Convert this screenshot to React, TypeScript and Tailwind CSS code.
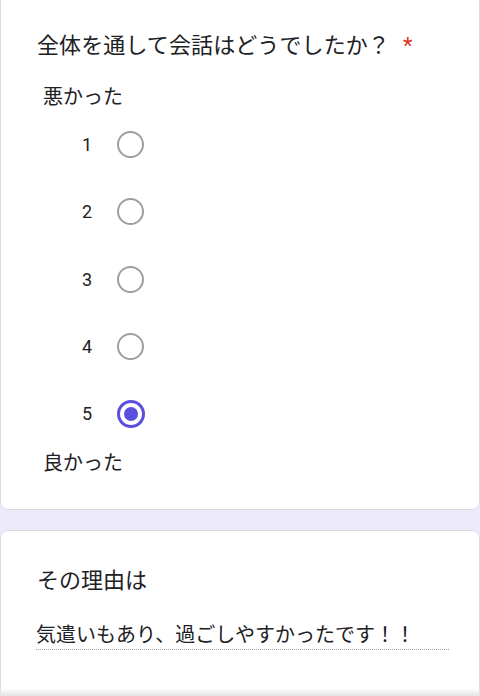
import React from 'react';

const font = { fontFamily: '"Noto Sans CJK JP", "Noto Sans", sans-serif' };

const Radio = ({ checked }: { checked?: boolean }) =>
  checked ? (
    <div className="flex h-[28px] w-[28px] items-center justify-center rounded-full border-[3px] border-[#5b4fe0]">
      <div className="h-[14px] w-[14px] rounded-full bg-[#5b4fe0]" />
    </div>
  ) : (
    <div className="h-[27px] w-[27px] rounded-full border-[2.5px] border-[#9e9e9e]" />
  );

export default function App() {
  const selected = 5;

  return (
    <div className="relative h-[696px] overflow-hidden bg-[#eceafa] text-[#202124]" style={font}>
      {/* Question card */}
      <div className="-mt-2 h-[518px] rounded-lg border border-[#dadce0] bg-white pl-[36px] pt-[34px]">
        <h2 className="h-[33px] text-[22px] leading-[33px] tracking-[0.1px]">
          全体を通して会話はどうでしたか？
          <span className="ml-[13px] text-[#d93025]" style={{ fontFamily: 'Roboto, sans-serif' }}>*</span>
        </h2>
        <div className="mt-[21px] h-[30px] pl-[6px] text-[20px] leading-[30px]">悪かった</div>
        <div className="flex flex-col">
          {[1, 2, 3, 4, 5].map((n) => (
            <div key={n} className="flex h-[67.25px] items-center pl-[40px]">
              <span className="w-[20px] text-center text-[18px]" style={{ fontFamily: 'Roboto, sans-serif' }}>
                {n}
              </span>
              <div className="ml-[20px]">
                <Radio checked={n === selected} />
              </div>
            </div>
          ))}
        </div>
        <div className="h-[30px] pl-[6px] text-[20px] leading-[30px]">良かった</div>
      </div>

      {/* Reason card */}
      <div className="mt-[20px] h-[200px] rounded-lg border border-[#dadce0] bg-white pl-[35px] pr-[30px] pt-[31px]">
        <h2 className="h-[33px] pl-[1px] text-[22px] leading-[33px]">その理由は</h2>
        <div className="mt-[24px] h-[31px] border-b border-dotted border-[#9e9e9e] text-[20px] leading-[30px]">
          気遣いもあり、過ごしやすかったです！！
        </div>
      </div>

      {/* bottom shadow edge */}
      <div className="absolute bottom-0 left-0 right-0 h-[8px] bg-gradient-to-b from-transparent to-[#e4e4e6]" />
    </div>
  );
}
